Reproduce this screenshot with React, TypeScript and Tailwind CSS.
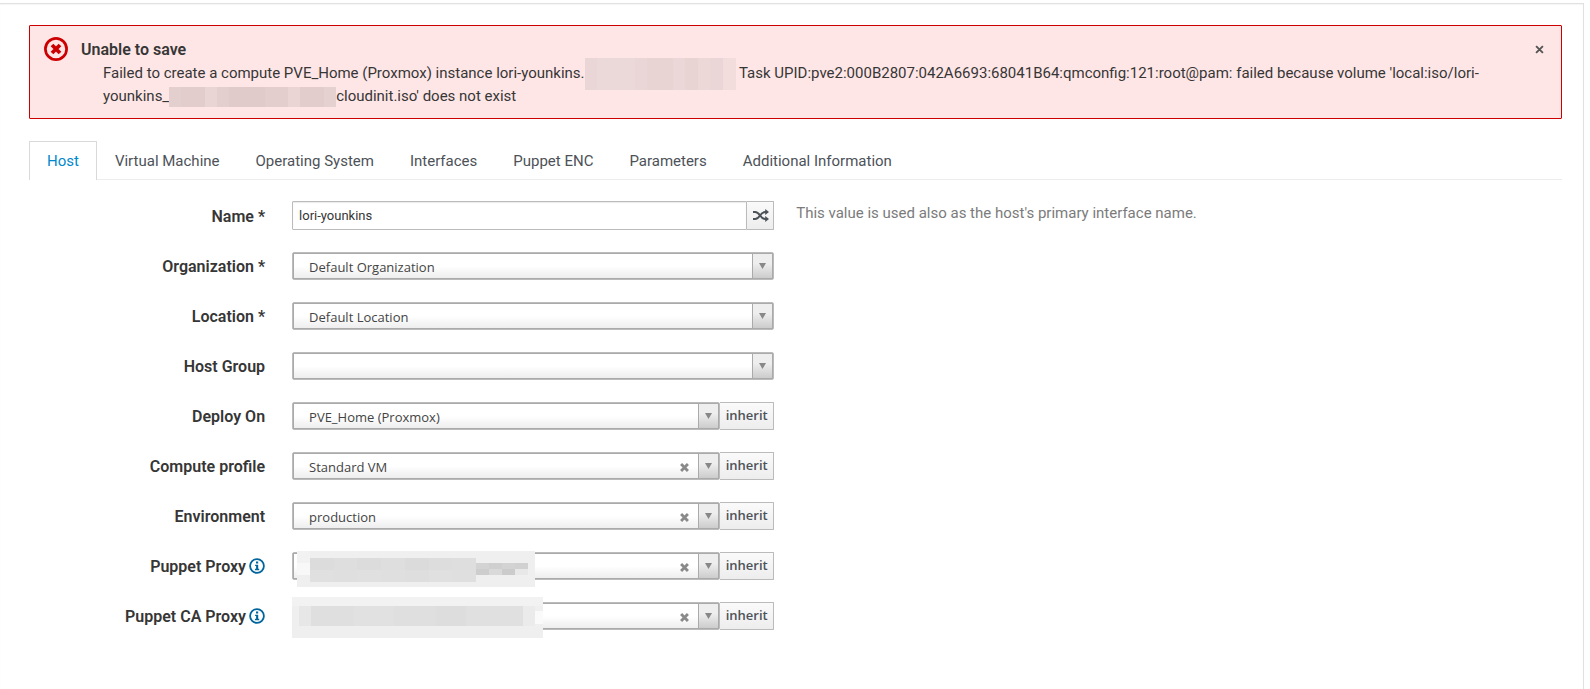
type Field = {
  id: string;
  label: string;
  value: string;
  clearable?: boolean;
  inherit?: boolean;
  info?: boolean;
  hidden?: "proxy" | "ca";
};

const tabs = [
  "Host",
  "Virtual Machine",
  "Operating System",
  "Interfaces",
  "Puppet ENC",
  "Parameters",
  "Additional Information",
];

const fields: Field[] = [
  { id: "organization", label: "Organization *", value: "Default Organization" },
  { id: "location", label: "Location *", value: "Default Location" },
  { id: "hostgroup", label: "Host Group", value: "" },
  { id: "deploy", label: "Deploy On", value: "PVE_Home (Proxmox)", inherit: true },
  { id: "profile", label: "Compute profile", value: "Standard VM", clearable: true, inherit: true },
  { id: "environment", label: "Environment", value: "production", clearable: true, inherit: true },
  { id: "proxy", label: "Puppet Proxy", value: "", clearable: true, inherit: true, info: true, hidden: "proxy" },
  { id: "caproxy", label: "Puppet CA Proxy", value: "", clearable: true, inherit: true, info: true, hidden: "ca" },
];

function ErrorIcon() {
  return (
    <svg viewBox="0 0 24 24" className="h-6 w-6 shrink-0" aria-hidden="true">
      <circle cx="12" cy="12" r="10.6" fill="none" stroke="#cc0000" strokeWidth="2.7" />
      <path d="M8 8l8 8M16 8l-8 8" stroke="#cc0000" strokeWidth="3.8" />
    </svg>
  );
}

function InfoIcon() {
  return (
    <svg viewBox="0 0 16 16" className="h-4 w-4" aria-hidden="true">
      <circle cx="8" cy="8" r="6.9" fill="none" stroke="#00659c" strokeWidth="1.8" />
      <path d="M7 3.6h2.2v1.9H7zM6.1 6.7h3.1v4h1v1.5H6v-1.5h1.1V8.1h-1z" fill="#00659c" />
    </svg>
  );
}

function ShuffleIcon() {
  return (
    <svg viewBox="0 0 16 13" className="h-[13px] w-4" aria-hidden="true">
      <g fill="none" stroke="#4d5258" strokeWidth="2">
        <path d="M0 3h2.2c2.4 0 3.5 1.6 4.8 3.4S9.8 10 12.2 10h.8" />
        <path d="M0 10h2.2c2.4 0 3.5-1.6 4.8-3.5S9.8 3 12.2 3h.8" />
      </g>
      <path d="M12.2 0L16 3l-3.8 3zM12.2 7L16 10l-3.8 3z" fill="#4d5258" />
    </svg>
  );
}

function ClearIcon() {
  return (
    <svg viewBox="0 0 10 10" className="h-[9px] w-[9px]" aria-hidden="true">
      <path d="M1.2 1.2l7.6 7.6M8.8 1.2l-7.6 7.6" stroke="#8a8a8a" strokeWidth="3.2" />
    </svg>
  );
}

function ProxyMask() {
  return (
    <div className="absolute -top-px left-[5px] flex h-9 w-[238px] items-center bg-[#efefef] pl-[13px]" aria-hidden="true">
      <div className="absolute left-0 top-0 h-3 w-[13px] bg-[#f2f2f2]" />
      <div className="absolute left-0 top-3 h-3 w-[13px] bg-[#f8f8f8]" />
      <div className="mt-[2px] grid h-6 w-[166px] grid-cols-7">
        <div className="bg-[#dcdcdc]" />
        <div className="bg-[#dedede]" />
        <div className="bg-[#dcdcdc]" />
        <div className="bg-[#dedede]" />
        <div className="bg-[#dbdbdb]" />
        <div className="bg-[#dddddd]" />
        <div className="bg-[#dedede]" />
        <div className="bg-[#e0e0e0]" />
        <div className="bg-[#dfdfdf]" />
        <div className="bg-[#e0e0e0]" />
        <div className="bg-[#dfdfdf]" />
        <div className="bg-[#dedede]" />
        <div className="bg-[#e0e0e0]" />
        <div className="bg-[#dfdfdf]" />
      </div>
      <div className="grid h-3 w-[52px] grid-cols-4">
        <div className="bg-[#d3d3d3]" />
        <div className="bg-[#cfcfcf]" />
        <div className="bg-[#d3d3d3]" />
        <div className="bg-[#d1d1d1]" />
        <div className="bg-[#cdcdcd]" />
        <div className="bg-[#d9d9d9]" />
        <div className="bg-[#cbcbcb]" />
        <div className="bg-[#e8e8e8]" />
      </div>
    </div>
  );
}

function CaMask() {
  return (
    <div className="absolute -top-[5px] left-0 h-[41px] w-[251px] bg-[#efefef] pt-[9px]" aria-hidden="true">
      <div className="absolute inset-x-0 top-0 h-[9px] bg-[#f2f2f2]" />
      <div className="flex h-5">
        <div className="w-[7px] bg-[#efefef]" />
        <div className="w-3 bg-[#e7e7e7]" />
        <div className="w-[43px] bg-[#dfdfdf]" />
        <div className="w-10 bg-[#e1e1e1]" />
        <div className="w-[42px] bg-[#dfdfdf]" />
        <div className="w-[30px] bg-[#dddddd]" />
        <div className="w-[57px] bg-[#e0e0e0]" />
        <div className="w-3 bg-[#ebebeb]" />
        <div className="mt-[5px] h-[13px] w-2 bg-[#fafafa]" />
      </div>
    </div>
  );
}

function SelectRow({ field }: { field: Field }) {
  return (
    <div className="flex">
      <div className="flex h-7 w-[17.16%] items-center justify-end gap-[3px] pr-[27px] pt-[2px]">
        <label htmlFor={field.id} className="text-base font-semibold">
          {field.label}
        </label>
        {field.info && (
          <button type="button" aria-label={`About ${field.label}`} className="pb-[2px]">
            <InfoIcon />
          </button>
        )}
      </div>
      <div className="relative flex h-7 w-[31.45%]">
        <div className="flex min-w-0 flex-1 rounded-[2px] border border-[#bbbbbb]">
          <div className="flex min-w-0 flex-1 border border-[#aaaaaa] bg-linear-to-t from-[#eeeeee] to-white to-50%">
            <select
              id={field.id}
              defaultValue={field.value}
              className="min-w-0 flex-1 appearance-none bg-transparent pl-[15px] pt-[3px] font-['Open_Sans',sans-serif] text-[13px] text-[#444444] outline-none"
            >
              <option value={field.value}>{field.value}</option>
            </select>
            {field.clearable && (
              <button type="button" aria-label={`Clear ${field.label}`} className="flex w-7 items-center justify-center pt-[3px]">
                <ClearIcon />
              </button>
            )}
            <span className="flex w-5 items-center justify-center border-l border-[#aaaaaa] bg-linear-to-t from-[#cccccc] to-[#eeeeee] to-60%">
              <svg viewBox="0 0 7 6" className="h-[6px] w-[7px]" aria-hidden="true">
                <path d="M0 0h7L3.5 6z" fill="#888888" />
              </svg>
            </span>
          </div>
        </div>
        {field.inherit && (
          <button
            type="button"
            className="w-[54px] rounded-r-[1px] border border-l-0 border-[#bbbbbb] bg-linear-to-b from-[#fafafa] to-[#ededed] pb-[2px] font-['Open_Sans',sans-serif] text-[13px] font-semibold leading-5 text-[#4d5258]"
          >
            inherit
          </button>
        )}
        {field.hidden === "proxy" && <ProxyMask />}
        {field.hidden === "ca" && <CaMask />}
      </div>
    </div>
  );
}

export default function App() {
  return (
    <div className="pr-[6px] pt-[3px] font-[Roboto,sans-serif] text-[#363636]">
      <main className="min-h-[calc(100vh-3px)] border-r border-t border-[#e1e1e1] pb-12 pl-[29px] pr-[21px] pt-[21px] shadow-[inset_0_1px_1px_rgba(0,0,0,0.04)]">
        <div role="alert" className="flex items-start rounded-[1px] border border-[#cc0000] bg-[#ffe6e6] px-[14px] pb-[10px] pt-[11px]">
          <ErrorIcon />
          <div className="min-w-0 flex-1 pl-[13px] pr-[30px] pt-px">
            <strong className="block text-base font-semibold leading-6">Unable to save</strong>
            <p className="pl-[22px] text-[15px] leading-[23px]">
              Failed to create a compute PVE_Home (Proxmox) instance lori-younkins.
              <span className="-my-2 inline-flex h-8 w-[151px] align-middle" aria-hidden="true">
                <span className="flex-1 bg-[#ead6d6]" />
                <span className="flex-3 bg-[#ebd8d8]" />
                <span className="flex-1 bg-[#ead6d6]" />
                <span className="flex-2 bg-[#e9d4d4]" />
                <span className="flex-1 bg-[#ebd7d7]" />
                <span className="flex-1 bg-[#e9d4d4]" />
                <span className="flex-1 bg-[#edd8d8]" />
                <span className="flex-1 bg-[#ead6d6]" />
                <span className="flex-1 bg-[#f3dcdc]" />
              </span>{" "}
              Task UPID:pve2:000B2807:042A6693:68041B64:qmconfig:121:root@pam: failed because volume 'local:iso/lori-
              <span>younkins_</span>
              <span className="-my-1 inline-flex h-5 w-[167px] align-middle" aria-hidden="true">
                <span className="flex-1 bg-[#e4cfcf]" />
                <span className="flex-2 bg-[#e2cccc]" />
                <span className="flex-1 bg-[#ead5d5]" />
                <span className="flex-1 bg-[#e4cfcf]" />
                <span className="flex-3 bg-[#e0caca]" />
                <span className="flex-2 bg-[#e3cdcd]" />
                <span className="flex-1 bg-[#ead4d4]" />
                <span className="flex-2 bg-[#e2cccc]" />
                <span className="flex-1 bg-[#e6d1d1]" />
              </span>
              cloudinit.iso' does not exist
            </p>
          </div>
          <button type="button" aria-label="Close" className="flex h-6 w-4 items-center justify-center">
            <svg viewBox="0 0 10 10" className="h-[9px] w-[9px]" aria-hidden="true">
              <path d="M1.2 1.2l7.6 7.6M8.8 1.2l-7.6 7.6" stroke="#555555" strokeWidth="2.1" />
            </svg>
          </button>
        </div>

        <nav className="mt-[22px] flex border-b border-[#ededed] text-[15px]" aria-label="Host sections">
          {tabs.map((tab, i) => (
            <a
              key={tab}
              href="#"
              aria-current={i === 0 ? "page" : undefined}
              className={
                i === 0
                  ? "-mb-px h-[39px] rounded-t-[1px] border border-b-0 border-[#d9d9d9] bg-white px-[17px] pt-2 leading-[23px] text-[#0088ce]"
                  : "h-[38px] border border-b-0 border-transparent px-[17px] pt-2 leading-[23px] text-[#4d5258]"
              }
            >
              {tab}
            </a>
          ))}
        </nav>

        <form className="mt-[21px] flex flex-col gap-[22px]">
          <div className="flex">
            <div className="flex h-[29px] w-[17.16%] items-center justify-end pr-[27px] pt-[2px]">
              <label htmlFor="name" className="text-base font-semibold">
                Name *
              </label>
            </div>
            <div className="flex h-[29px] w-[31.45%]">
              <input
                id="name"
                type="text"
                defaultValue="lori-younkins"
                className="min-w-0 flex-1 rounded-l-[1px] border border-[#bbbbbb] pl-[6px] text-[13px] shadow-[inset_0_1px_1px_rgba(0,0,0,0.08)] outline-none"
              />
              <button
                type="button"
                aria-label="Generate a random name"
                className="flex w-[27px] items-center justify-center rounded-r-[1px] border border-l-0 border-[#bbbbbb] bg-linear-to-b from-[#fafafa] to-[#ededed] pl-px pb-px"
              >
                <ShuffleIcon />
              </button>
            </div>
            <p className="pl-[22px] pt-px text-[15px] leading-[23px] text-[#7b7b7b]">
              This value is used also as the host's primary interface name.
            </p>
          </div>
          {fields.map((field) => (
            <SelectRow key={field.id} field={field} />
          ))}
        </form>
      </main>
    </div>
  );
}
